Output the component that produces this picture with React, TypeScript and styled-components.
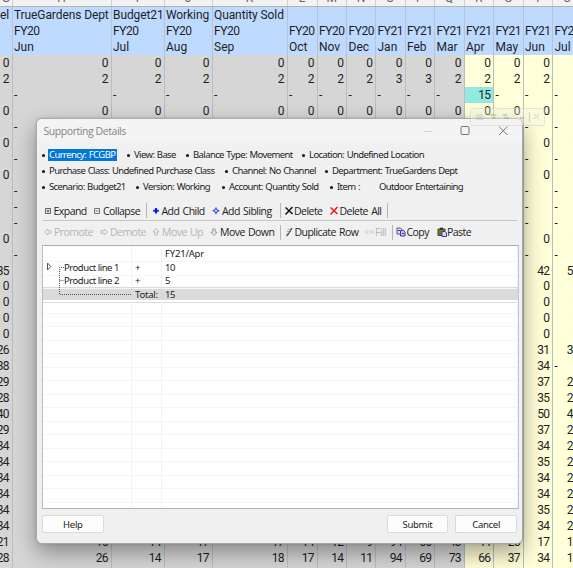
import React from "react";
import styled, { createGlobalStyle } from "styled-components";

const GlobalStyle = createGlobalStyle`
  body { margin: 0; overflow: hidden; background: #d4d4d4; }
  * { box-sizing: border-box; }
`;

const Screen = styled.main`
  position: relative;
  width: 573px;
  height: 568px;
  overflow: hidden;
`;

/* ---------- spreadsheet ---------- */

const Sheet = styled.div`
  width: 582px;
  font-family: Roboto, "Open Sans", sans-serif;
  font-size: 12px;
  color: #1f1f1f;
`;

const columns = "12.5px 99px 53px 48px 75px 30px 29.5px 29px 29.5px 29.5px 29.5px 29.5px 29.5px 29.5px 29.5px";

const Letters = styled.div`
  display: grid;
  grid-template-columns: ${columns};
  height: 7px;
  overflow: hidden;
  background: #f2f2f2;
  border-bottom: 1px solid #b3b3b3;
`;

const Letter = styled.span`
  height: 15px;
  margin-top: -8px;
  text-align: center;
  line-height: 12px;
  color: #666;
  border-right: 1px solid #cfcfcf;
`;

const SheetRow = styled.div`
  display: grid;
  grid-template-columns: ${columns};
  height: 15.97px;
`;

type Tone = "head" | "past" | "open" | "pick";
const tones: Record<Tone, string> = {
  head: "#bedaff",
  past: "#d6d6d6",
  open: "#ffffd9",
  pick: "#91eae1",
};

const Cell = styled.div<{ $tone: Tone; $num: boolean }>`
  background: ${(p) => tones[p.$tone]};
  border-right: 1px solid ${(p) => (p.$tone === "head" ? "#b7c3d4" : "#bdbdbd")};
  border-bottom: 1px solid ${(p) => (p.$tone === "head" ? "#b7c3d4" : "#bdbdbd")};
  display: flex;
  justify-content: ${(p) => (p.$num ? "flex-end" : "flex-start")};
  padding: 0 2.5px 0 1.5px;
  line-height: 16px;
  white-space: nowrap;
  min-width: 0;
  letter-spacing: ${(p) => (p.$num ? "-0.6px" : "0")};
`;

const HeadText = styled.span<{ $ls: number }>`
  letter-spacing: ${(p) => p.$ls}px;
`;

const rep = (v: string, n: number) => Array.from({ length: n }, () => v);

const headRows: string[][] = [
  ["el", "TrueGardens Dept", "Budget21", "Working", "Quantity Sold", ...rep("", 10)],
  ["", ...rep("FY20", 7), ...rep("FY21", 7)],
  ["", "Jun", "Jul", "Aug", "Sep", "Oct", "Nov", "Dec", "Jan", "Feb", "Mar", "Apr", "May", "Jun", "Jul"],
];

const edgeRow = (a: string, b: string, c: string) => [a, ...rep("", 12), b, c];
const dashRow = ["", "-", ...rep("", 11), "-", "-"];
const zeroRow = edgeRow("0", "0", "0");

const bodyRows: string[][] = [
  rep("0", 15),
  ["2", "2", "2", "2", "2", "2", "2", "2", "3", "3", "2", "2", "2", "2", "2"],
  ["", ...rep("-", 10), "15", "-", "-", "-"],
  rep("0", 15),
  dashRow,
  zeroRow,
  dashRow,
  zeroRow,
  dashRow,
  dashRow,
  dashRow,
  zeroRow,
  dashRow,
  edgeRow("35", "42", "52"),
  zeroRow,
  zeroRow,
  zeroRow,
  zeroRow,
  edgeRow("26", "31", "31"),
  edgeRow("38", "34", "-"),
  edgeRow("29", "37", "27"),
  edgeRow("28", "35", "25"),
  edgeRow("40", "50", "40"),
  edgeRow("29", "37", "27"),
  edgeRow("34", "34", "24"),
  edgeRow("34", "35", "25"),
  edgeRow("34", "34", "24"),
  edgeRow("34", "34", "24"),
  edgeRow("34", "35", "25"),
  edgeRow("34", "34", "24"),
  ["21", "16", "14", "17", "17", "14", "12", "9", "94", "66", "43", "44", "25", "17", "17"],
  ["28", "26", "14", "17", "18", "17", "14", "11", "94", "69", "73", "66", "37", "34", "17"],
  rep("", 15),
];

const Spreadsheet = () => (
  <Sheet>
    <Letters>
      {"GHIJKLMNOPQRSTU".split("").map((l) => (
        <Letter key={l}>{l}</Letter>
      ))}
    </Letters>
    {headRows.map((row, r) => (
      <SheetRow key={r}>
        {row.map((v, c) => (
          <Cell key={c} $tone="head" $num={c === 0}>
            <HeadText $ls={r === 1 ? -0.45 : r === 0 ? -0.1 : 0}>{v}</HeadText>
          </Cell>
        ))}
      </SheetRow>
    ))}
    {bodyRows.map((row, r) => (
      <SheetRow key={r}>
        {row.map((v, c) => (
          <Cell key={c} $num={v !== "-"} $tone={v === "15" ? "pick" : c < 11 ? "past" : "open"}>
            {v}
          </Cell>
        ))}
      </SheetRow>
    ))}
  </Sheet>
);

/* ---------- faint floating bar ---------- */

const GhostBar = styled.div`
  position: absolute;
  left: 470px;
  top: 108px;
  width: 75px;
  height: 18px;
  border: 1px solid rgba(160, 160, 140, 0.22);
  border-radius: 2px;
  background: rgba(240, 240, 235, 0.35);
  display: flex;
  align-items: center;
  padding-left: 4px;
`;

const Ghost = () => (
  <GhostBar>
    <svg width="68" height="12" fill="none" stroke="#8f9a94" opacity=".4">
      <path d="M1 4h7M1 6h7M1 8h7" stroke="#6f9dbb" />
      <path d="M15 4h6M17 7h4" stroke="#b6a35a" strokeWidth="2" />
      <path d="M28 4h4M29 7h5M45 7h4" strokeWidth="2" />
      <path d="M54.5 1v10" />
      <path d="m59 3 5 5m0-5-5 5" />
    </svg>
  </GhostBar>
);

/* ---------- dialog ---------- */

const Dialog = styled.section`
  position: absolute;
  left: 36px;
  top: 118px;
  width: 487px;
  height: 426px;
  border: 1px solid #a9a9a9;
  border-radius: 6px;
  background: #f0f0f0;
  box-shadow: 0 9px 22px rgba(0, 0, 0, 0.36), 0 0 3px rgba(0, 0, 0, 0.15);
  overflow: hidden;
  padding: 0 4px 0 5px;
  display: flex;
  flex-direction: column;
  font-family: "Open Sans", "Noto Sans", sans-serif;
  color: #222;
`;

const TitleBar = styled.header`
  display: flex;
  justify-content: space-between;
  height: 28px;
  margin: 0 -4px 0 -5px;
  padding: 0 12.5px 0 6.5px;
  background: linear-gradient(#f4f4f4 70%, #f0f0f0);
  color: #858585;
  font-size: 10.5px;
  line-height: 25px;
  letter-spacing: -0.44px;
`;

const InfoBlock = styled.div`
  display: flex;
  flex-direction: column;
  height: 54px;
  font-family: "Noto Sans", sans-serif;
  font-size: 9.5px;
`;

const InfoRow = styled.div`
  display: flex;
  align-items: center;
  height: 16px;
`;

const InfoItem = styled.span<{ $w: number }>`
  display: flex;
  align-items: center;
  width: ${(p) => p.$w}px;
  flex: none;
  white-space: nowrap;
  letter-spacing: -0.6px;
  word-spacing: 0.6px;
  &::before {
    content: "";
    flex: none;
    width: 3px;
    height: 3px;
    border-radius: 50%;
    background: #111;
    margin-right: 3px;
  }
`;

const InfoText = styled.span<{ $selected?: boolean }>`
  line-height: 12px;
  padding: 0 1px;
  ${(p) => p.$selected && "background: #0078d7; color: #fff; padding-right: 2px;"}
`;

const Tail = styled.span`
  line-height: 12px;
  margin-left: 18px;
`;

type Info = { w: number; text: string; tail?: string };
const info: Info[][] = [
  [
    { w: 85, text: "Currency: FCGBP" },
    { w: 59, text: "View: Base" },
    { w: 116, text: "Balance Type: Movement" },
    { w: 150, text: "Location: Undefined Location" },
  ],
  [
    { w: 183, text: "Purchase Class: Undefined Purchase Class" },
    { w: 100, text: "Channel: No Channel" },
    { w: 150, text: "Department: TrueGardens Dept" },
  ],
  [
    { w: 94, text: "Scenario: Budget21" },
    { w: 86, text: "Version: Working" },
    { w: 108, text: "Account: Quantity Sold" },
    { w: 150, text: "Item :", tail: "Outdoor Entertaining" },
  ],
];

const ToolRow = styled.div<{ $h: number }>`
  display: flex;
  align-items: center;
  height: ${(p) => p.$h}px;
`;

const Rule = styled.hr`
  width: 474px;
  height: 1px;
  margin: 0 0 0 1px;
  border: 0;
  background: #c6c6c6;
`;

const Divider = styled.span`
  flex: none;
  width: 1px;
  height: 15px;
  margin-right: 3px;
  background: #b5b5b5;
`;

const ToolButton = styled.button<{ $w: number; $off?: boolean }>`
  display: flex;
  align-items: center;
  flex: none;
  width: ${(p) => p.$w}px;
  height: 16px;
  padding: 0;
  border: 0;
  background: none;
  font: 10.5px/16px "Open Sans", sans-serif;
  letter-spacing: -0.54px;
  word-spacing: 1px;
  color: ${(p) => (p.$off ? "#b4b4b4" : "#222")};
  white-space: nowrap;
`;

const IconBox = styled.span<{ $w: number }>`
  flex: none;
  display: flex;
  justify-content: center;
  width: ${(p) => p.$w}px;
`;

type Glyph =
  | "expand" | "collapse" | "child" | "sibling" | "delete" | "deleteAll"
  | "left" | "right" | "up" | "down" | "duplicate" | "fill" | "copy" | "paste";

const arrow = "M1.5 5 4.8 2V3.8H8V6.2H4.8V8Z";

const glyphs: Record<Glyph, React.ReactNode> = {
  expand: <path d="M2.5 2.5h5v5h-5zM3.5 5h3M5 3.5v3" stroke="#555" strokeWidth=".9" />,
  collapse: <path d="M2.5 2.5h5v5h-5zM3.5 5h3" stroke="#666" strokeWidth=".9" />,
  child: <path d="M5 2v5.6M2.2 4.8h5.6" stroke="#0b18e8" strokeWidth="2" />,
  sibling: <path d="M5 2 6 3.8 7.8 4.8 6 5.8 5 7.6 4 5.8 2.2 4.8 4 3.8Z" stroke="#4a58e8" strokeWidth="1.2" />,
  delete: <path d="m1.5 1.5 7 6.5M8.5 1l-7 7.5" stroke="#111" strokeWidth="1.5" />,
  deleteAll: <path d="m1.5 1.5 7 6.5M8.5 1l-7 7.5" stroke="#f01818" strokeWidth="1.5" />,
  left: <path d={arrow} stroke="#bbb" />,
  right: <path d={arrow} stroke="#bbb" transform="rotate(180 5 5)" />,
  up: <path d={arrow} stroke="#bbb" transform="rotate(90 5 5)" />,
  down: <path d={arrow} stroke="#999" transform="rotate(-90 5 5)" />,
  duplicate: (
    <>
      <path d="M3.5 2.2h4M2.6 4.5h4M2 6.8h2.5" stroke="#aaa" />
      <path d="M8 1 4 7.5 2.5 9" stroke="#555" strokeWidth="1.3" />
    </>
  ),
  fill: <path d="M1 3.5v3M2.5 3.5h1.8L2.8 6.5h1.8M5.5 4h3M5.5 6h3M8 3l1.5 2L8 7" stroke="#c8c8c8" strokeWidth=".9" />,
  copy: (
    <>
      <path d="M1 1h3.5L6 2.5V7H1z" fill="#dfe0f4" stroke="#55558f" />
      <path d="M4.5 3.5h3L9 5v4H4.5z" fill="#c9cbf2" stroke="#3a3a98" />
      <path d="M2 3.5h2M6 6.5h2" stroke="#3a3a98" />
    </>
  ),
  paste: (
    <>
      <path d="M1 2h7v6.5H1z" fill="#7c7735" stroke="#45431f" />
      <path d="M3 1.5h3" stroke="#222" strokeWidth="1.6" />
      <path d="M5 4.5h3L9.5 6v3.5H5z" fill="#d6d8fa" stroke="#3a3aa8" />
    </>
  ),
};

const Icon = ({ name }: { name: Glyph }) => (
  <svg width="10" height="10" viewBox="0 0 10 10" fill="none">
    {glyphs[name]}
  </svg>
);

type Tool = { w: number; iw: number; icon: Glyph; label: string; off?: boolean } | null;

const tools1: Tool[] = [
  { w: 49.5, iw: 11.5, icon: "expand", label: "Expand" },
  { w: 54.5, iw: 11.5, icon: "collapse", label: "Collapse" },
  null,
  { w: 60, iw: 11.5, icon: "child", label: "Add Child" },
  { w: 70, iw: 12, icon: "sibling", label: "Add Sibling" },
  null,
  { w: 45, iw: 10, icon: "delete", label: "Delete" },
  { w: 58, iw: 10.5, icon: "deleteAll", label: "Delete All" },
  null,
];

const tools2: Tool[] = [
  { w: 55, iw: 12, icon: "left", label: "Promote", off: true },
  { w: 52, iw: 13, icon: "right", label: "Demote", off: true },
  { w: 58, iw: 13, icon: "up", label: "Move Up", off: true },
  { w: 73, iw: 13, icon: "down", label: "Move Down" },
  null,
  { w: 79, iw: 10.5, icon: "duplicate", label: "Duplicate Row" },
  { w: 29, iw: 12, icon: "fill", label: "Fill", off: true },
  null,
  { w: 40, iw: 10.5, icon: "copy", label: "Copy" },
  { w: 40, iw: 11, icon: "paste", label: "Paste" },
];

const Tools = ({ items, h }: { items: Tool[]; h: number }) => (
  <ToolRow $h={h}>
    {items.map((t, i) =>
      t ? (
        <ToolButton key={i} $w={t.w} $off={t.off}>
          <IconBox $w={t.iw}>
            <Icon name={t.icon} />
          </IconBox>
          {t.label}
        </ToolButton>
      ) : (
        <Divider key={i} />
      )
    )}
  </ToolRow>
);

const List = styled.div`
  width: 477px;
  height: 264px;
  margin-top: 2px;
  border: 1px solid;
  border-color: #a8abb2 #c4c6cc #b4b4b4 #b9bbc0;
  background: #fff;
  overflow: hidden;
  font-size: 9.5px;
  font-family: "Noto Sans", sans-serif;
  letter-spacing: -0.46px;
`;

const ListRow = styled.div<{ $total?: boolean }>`
  display: grid;
  grid-template-columns: 89px 30px 1fr;
  height: 13.5px;
  line-height: 15px;
  background: ${(p) => (p.$total ? "#dadada" : "#fff")};
  & > span {
    padding-left: 3px;
    border-bottom: 1px solid ${(p) => (p.$total ? "#dadada" : "#f6f6f6")};
    border-right: 1px solid ${(p) => (p.$total ? "#dadada" : "#f2f2f2")};
    white-space: nowrap;
  }
`;

const TreeCell = styled.span`
  display: flex;
  align-items: flex-start;
`;

const TreeMark = styled.svg`
  flex: none;
  width: 18px;
  height: 13.5px;
`;

const TotalTree = styled.svg`
  width: 86px;
  height: 13.5px;
  display: block;
`;

const Spaced = styled.span`
  letter-spacing: -0.2px;
`;

const Footer = styled.footer`
  display: flex;
  gap: 7px;
  margin-top: 6px;
  padding-right: 1px;
`;

const PushButton = styled.button<{ $first?: boolean }>`
  width: 62px;
  height: 18px;
  margin-right: ${(p) => (p.$first ? "276px" : "0")};
  padding: 0;
  border: 1px solid #dadada;
  border-radius: 2px;
  background: #fdfdfd;
  font: 9.5px/15px "Noto Sans", sans-serif;
  letter-spacing: -0.3px;
  color: #222;
`;

const dots = { stroke: "#555", strokeDasharray: "1 1", fill: "none" };

const SupportingDetails = () => (
  <Dialog>
    <TitleBar>
      Supporting Details
      <svg width="88" height="25" fill="none" stroke="#777">
        <path d="M1.5 12.5h9" stroke="#cfcfcf" />
        <rect x="39" y="7.5" width="8" height="8" rx="1" />
        <path d="m77 7.5 8.5 8.5m0-8.5-8.5 8.5" />
      </svg>
    </TitleBar>
    <InfoBlock>
      {info.map((row, r) => (
        <InfoRow key={r}>
          {row.map((it, i) => (
            <InfoItem key={it.text} $w={it.w}>
              <InfoText $selected={r === 0 && i === 0}>{it.text}</InfoText>
              {it.tail && <Tail>{it.tail}</Tail>}
            </InfoItem>
          ))}
        </InfoRow>
      ))}
    </InfoBlock>
    <Tools items={tools1} h={19} />
    <Rule />
    <Tools items={tools2} h={22} />
    <List>
      <ListRow>
        <span />
        <span />
        <Spaced>FY21/Apr</Spaced>
      </ListRow>
      <ListRow>
        <TreeCell>
          <TreeMark>
            <path d="M1.5 3v7l3.2-3.5z" fill="none" stroke="#555" />
            <path d="M13.5 14V7.5H18" {...dots} />
          </TreeMark>
          Product line 1
        </TreeCell>
        <span>+</span>
        <span>10</span>
      </ListRow>
      <ListRow>
        <TreeCell>
          <TreeMark>
            <path d="M13.5 0V14M13.5 7.5H18" {...dots} />
          </TreeMark>
          Product line 2
        </TreeCell>
        <span>+</span>
        <span>5</span>
      </ListRow>
      <ListRow $total>
        <span>
          <TotalTree>
            <path d="M13.5 0V7.5H86" {...dots} />
          </TotalTree>
        </span>
        <Spaced>Total:</Spaced>
        <span>15</span>
      </ListRow>
      {Array.from({ length: 16 }, (_, i) => (
        <ListRow key={i}>
          <span />
          <span />
          <span />
        </ListRow>
      ))}
    </List>
    <Footer>
      <PushButton $first>Help</PushButton>
      <PushButton>Submit</PushButton>
      <PushButton>Cancel</PushButton>
    </Footer>
  </Dialog>
);

export default function App() {
  return (
    <>
      <GlobalStyle />
      <Screen>
        <Spreadsheet />
        <SupportingDetails />
        <Ghost />
      </Screen>
    </>
  );
}
